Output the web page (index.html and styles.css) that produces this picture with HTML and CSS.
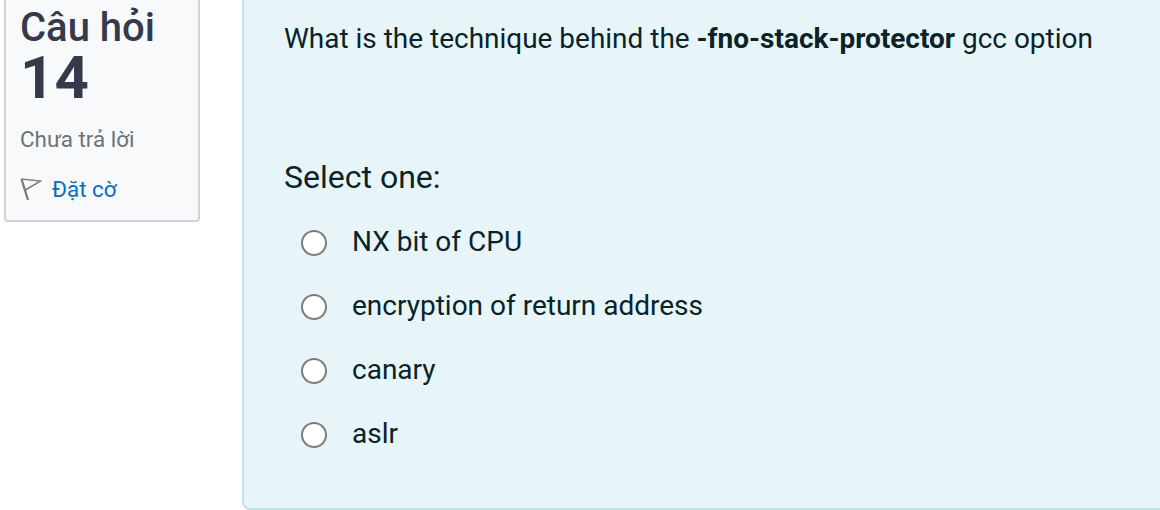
FILE: index.html
```html
<!DOCTYPE html>
<html lang="vi">
<head>
<meta charset="utf-8">
<title>Câu hỏi 14</title>
<link rel="stylesheet" href="styles.css">
</head>
<body>
<main class="que">
  <aside class="info">
    <h3 class="qno-title">Câu hỏi</h3>
    <div class="qno">14</div>
    <div class="state">Chưa trả lời</div>
    <a class="flag" href="#">
      <svg class="flag-icon" width="22" height="24" viewBox="0 0 22 24" aria-hidden="true">
        <path d="M1.5 2 L8 23" fill="none" stroke="#777" stroke-width="2.2"/>
        <path d="M1.5 2 L20.5 4 L5.5 13" fill="none" stroke="#808080" stroke-width="1.5"/>
      </svg>
      <span>Đặt cờ</span>
    </a>
  </aside>
  <section class="content">
    <p class="qtext">What is the technique behind the <strong>-fno-stack-protector</strong> gcc option</p>
    <p class="prompt">Select one:</p>
    <div class="answers">
      <label class="answer"><span class="radio"></span>NX bit of CPU</label>
      <label class="answer"><span class="radio"></span>encryption of return address</label>
      <label class="answer"><span class="radio"></span>canary</label>
      <label class="answer"><span class="radio"></span>aslr</label>
    </div>
  </section>
</main>
</body>
</html>
```
FILE: styles.css
```css
html, body {
  margin: 0;
  padding: 0;
  height: 510px;
  overflow: hidden;
  background: #fff;
}
body {
  font-family: Roboto, "Noto Sans", sans-serif;
  color: #0a2328;
}
.que {
  display: flex;
  align-items: flex-start;
  gap: 42px;
  padding-left: 4px;
  margin-top: -10px;
}
.info {
  box-sizing: border-box;
  flex: 0 0 196px;
  height: 232px;
  padding: 16px 14px 0;
  background: #f8f9fa;
  border: 2px solid #ced4da;
  border-radius: 4px;
}
.qno-title {
  margin: 0;
  font-size: 40px;
  line-height: 40px;
  font-weight: 500;
  color: #343a4a;
}
.qno {
  font-size: 60px;
  line-height: 60px;
  font-weight: 700;
  color: #343a4a;
}
.state {
  margin-top: 15px;
  font-size: 22.4px;
  line-height: 32px;
  color: #6a737b;
}
.flag {
  display: flex;
  align-items: center;
  gap: 10px;
  margin-top: 18px;
  font-size: 22.4px;
  line-height: 32px;
  color: #0f6cbf;
  text-decoration: none;
}
.flag-icon { display: block; }
.content {
  box-sizing: border-box;
  flex: 0 0 960px;
  height: 520px;
  padding: 26px 40px 0;
  background: #e7f5f9;
  border: 2px solid #bfe3e8;
  border-radius: 8px;
}
.qtext {
  margin: 0;
  font-size: 27.97px;
  line-height: 42px;
}
.prompt {
  margin: 95px 0 0;
  font-size: 32px;
  line-height: 44px;
}
.answers {
  display: flex;
  flex-direction: column;
  gap: 24px;
  margin-top: 23px;
  padding-left: 17px;
}
.answer {
  display: flex;
  align-items: center;
  gap: 25px;
  font-size: 28px;
  line-height: 40px;
}
.radio {
  box-sizing: border-box;
  width: 26px;
  height: 26px;
  margin-top: 2px;
  background: #fff;
  border: 2px solid #7c7c7c;
  border-radius: 50%;
}
```
